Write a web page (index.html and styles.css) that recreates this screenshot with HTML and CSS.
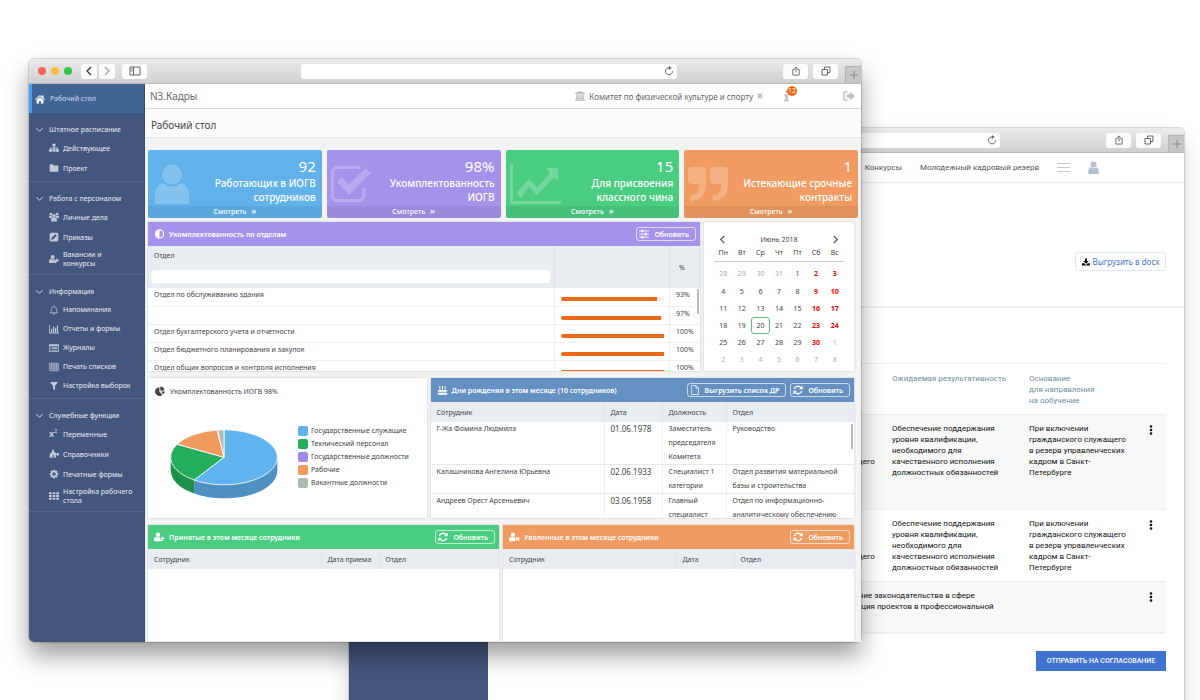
FILE: index.html
```html
<!DOCTYPE html>
<html lang="ru">
<head>
  <meta charset="UTF-8">
  <meta name="viewport" content="width=device-width, initial-scale=1.0">
  <title>N3.Кадры - Рабочий стол</title>
  <link rel="stylesheet" href="styles.css">
</head>
<body>
  <svg class="sprite" aria-hidden="true">
    <symbol id="i-left" viewBox="0 0 10 10"><path d="M7 1 3 5l4 4" fill="none" stroke="currentColor" stroke-width="1.2"/></symbol>
    <symbol id="i-right" viewBox="0 0 10 10"><path d="M3 1l4 4-4 4" fill="none" stroke="currentColor" stroke-width="1.2"/></symbol>
    <symbol id="i-down" viewBox="0 0 10 10"><path d="M1.5 3.500l3.500 3.500 3.500-3.500" fill="none" stroke="currentColor" stroke-width="1"/></symbol>
    <symbol id="i-panel" viewBox="0 0 12 10"><path d="M1 1h10v8H1zM4.500 1v8M2 3h1.500M2 5h1.500" fill="none" stroke="currentColor"/></symbol>
    <symbol id="i-reload" viewBox="0 0 10 10"><path d="M8.500 5.200A3.500 3.500 0 1 1 5.500 1.900" fill="none" stroke="currentColor"/><path d="M4.800 0l3 2-3 2z" fill="currentColor"/></symbol>
    <symbol id="i-share" viewBox="0 0 10 11"><path d="M3.500 4H1.500v6h7V4h-2M5 7V1M3 3l2-2 2 2" fill="none" stroke="currentColor"/></symbol>
    <symbol id="i-tabs" viewBox="0 0 10 10"><path d="M1 3.500h5.500V9H1zM3.500 3.500V1H9v5.500H6.500" fill="none" stroke="currentColor"/></symbol>
    <symbol id="i-plus" viewBox="0 0 10 10"><path d="M5 1v8M1 5h8" fill="none" stroke="currentColor"/></symbol>

    <symbol id="i-home" viewBox="0 0 16 16"><path d="M8 1.500 0 8.300l1 1.200 7-6 7 6 1-1.200-2.500-2.200V2h-2v2.400zM8 5 2.500 9.600V15h4v-4h3v4h4V9.600z"/></symbol>
    <symbol id="i-sitemap" viewBox="0 0 16 16"><path d="M5.500 1h5v4H8.700v2.200H14V10h2v4h-5v-4h1.600V8.600H8.700V10h1.700v4H5.600v-4h1.700V8.600H3.400V10H5v4H0v-4h2V7.200h5.300V5H5.500z"/></symbol>
    <symbol id="i-folder" viewBox="0 0 16 16"><path d="M1 3.500Q1 2 2.500 2h3Q7 2 7 4h6.500Q15 4 15 5.500v7q0 1.500-1.500 1.500h-11Q1 14 1 12.500z"/></symbol>
    <symbol id="i-users" viewBox="0 0 16 16"><circle cx="8" cy="6" r="2.900"/><circle cx="3" cy="3.500" r="2.200"/><circle cx="13" cy="3.500" r="2.200"/><path d="M3.500 15v-3q0-3.500 2.500-3.500 2 1.500 4 0 2.500 0 2.500 3.500v3zM0 9.500V8q0-2 1.500-2.200Q3 7 4.400 5.800q0 2 1 2.600-1.500.3-2 1.100zM16 9.500V8q0-2-1.500-2.200Q13 7 11.600 5.800q0 2-1 2.600 1.500.3 2 1.100z"/></symbol>
    <symbol id="i-edit" viewBox="0 0 16 16"><path fill-rule="evenodd" d="M4 1h8q3 0 3 3v8q0 3-3 3H4q-3 0-3-3V4q0-3 3-3zM3.500 12.500l3.300-.8 5.700-5.700-2.500-2.500-5.700 5.700z"/></symbol>
    <symbol id="i-useradd" viewBox="0 0 18 16"><circle cx="6.500" cy="4.500" r="3.700"/><path d="M0 15v-3q0-4 3.500-4 3 2 6 0 1.500 0 2.300 1H10v3h3v3zM13.200 7h1.800v2.500h2.500v1.900H15V14h-1.800v-2.600h-2.500V9.500h2.500z"/></symbol>
    <symbol id="i-userdel" viewBox="0 0 18 16"><circle cx="6.500" cy="4.500" r="3.700"/><path d="M0 15v-3q0-4 3.500-4 3 2 6 0l1.200.2L9.500 9.500 11.500 12 9 15z"/><path d="M11.500 8.500l5.500 5.500M17 8.500 11.500 14" stroke="currentColor" stroke-width="2"/></symbol>
    <symbol id="i-bell" viewBox="0 0 16 16"><path d="M8 1v1.500M2 12.500h12Q12 11 12 7q0-4.500-4-4.500T4 7q0 4-2 5.500zM6.500 13q0 1.800 1.500 1.800T9.500 13" fill="none" stroke="currentColor" stroke-width="1.200"/></symbol>
    <symbol id="i-chart" viewBox="0 0 16 16"><path d="M0 1h1.300v12.700H16V15H0zM3 8h2v5H3zM6.200 4h2v9h-2zM9.400 6h2v7h-2zM12.600 2.500h2V13h-2z"/></symbol>
    <symbol id="i-journal" viewBox="0 0 16 16"><path fill-rule="evenodd" d="M0 2h16v12H0zM1.200 5v7.800h13.600V5z"/><path d="M2.500 6.200h1.300v1.200H2.500zM5 6.200h8.500v1.200H5zM2.500 8.400h1.300v1.200H2.500zM5 8.400h8.500v1.200H5zM2.500 10.600h1.300v1.200H2.500zM5 10.600h8.500v1.200H5z"/></symbol>
    <symbol id="i-table" viewBox="0 0 16 16"><path d="M1 2h14v12H1zM1 5h14M1 8h14M1 11h14M4.500 2v12M8 2v12M11.500 2v12" fill="none" stroke="currentColor" stroke-width="1.100"/></symbol>
    <symbol id="i-filter" viewBox="0 0 16 16"><path d="M2 1.500h12v1L9.700 7.500V15L6.300 12V7.500L2 2.500z"/></symbol>
    <symbol id="i-tree" viewBox="0 0 16 16"><path d="M5 1h3v4h3v3h1V6.500h4v4h-4V9.500h-1V14H8v-4H6v4H1V8h1.500V5H5z"/></symbol>
    <symbol id="i-gear" viewBox="0 0 16 16"><circle cx="8" cy="8" r="4.200" fill="none" stroke="currentColor" stroke-width="3"/><path d="M8 1v2.500M8 12.500V15M1 8h2.500M12.500 8H15M3 3l1.800 1.800M11.200 11.200 13 13M13 3l-1.800 1.800M4.800 11.200 3 13" stroke="currentColor" stroke-width="2.600"/></symbol>
    <symbol id="i-grid" viewBox="0 0 16 16"><path d="M0 2h4.400v3.200H0zM5.800 2h4.400v3.200H5.800zM11.600 2H16v3.200h-4.400zM0 6.400h4.400v3.200H0zM5.800 6.400h4.400v3.200H5.800zM11.600 6.400H16v3.200h-4.400zM0 10.800h4.400V14H0zM5.800 10.800h4.400V14H5.800zM11.600 10.800H16V14h-4.400z"/></symbol>
    <symbol id="i-bank" viewBox="0 0 16 16"><path d="M8 0l8 3.200v1.300H0V3.200zM2 5.300h2v6.500h1.300V5.300h2v6.500h1.400V5.300h2v6.500H12V5.300h2v6.500h.8v1.400H1.200v-1.400H2zM0 13.900h16v1.600H0z"/></symbol>
    <symbol id="i-times" viewBox="0 0 10 10"><path d="M1.500 1.500l7 7M8.500 1.500l-7 7" stroke="currentColor" stroke-width="2.600"/></symbol>
    <symbol id="i-info" viewBox="0 0 8 16"><path d="M2.300 1h3.400v3H2.300zM1 5.500h5V13h1.200v2.200H.8V13h1.400V7.700H1z"/></symbol>
    <symbol id="i-exit" viewBox="0 0 16 16"><path d="M6 2.500H3Q1.200 2.500 1.200 4.300v7.400q0 1.800 1.800 1.800h3" fill="none" stroke="currentColor" stroke-width="1.800"/><path d="M5 6h4.500V2.500L15.800 8l-6.300 5.500V10H5z"/></symbol>
    <symbol id="i-user" viewBox="0 0 36 40"><circle cx="18" cy="10.500" r="10"/><path d="M1 40q-1-6 1-14 2-6 7-7 9 7 18 0 5 1 7 7 2 8 1 14-1 1-4 1H5q-3 0-4-1z"/></symbol>
    <symbol id="i-check" viewBox="0 0 42 38"><path d="M31 1.500H8Q1.500 1.500 1.500 8v22q0 6.500 6.500 6.500h20q6.500 0 6.500-6.500v-7" fill="none" stroke="currentColor" stroke-width="3.400"/><path d="M6 17l5-5 8 7.500L36 2.500l5.500 5L19 30.500z"/></symbol>
    <symbol id="i-trend" viewBox="0 0 52 40"><path d="M0 0h3v37h48v3H0z"/><path d="M6 29 19 15l8 8L40 9.500l-4-5.500h12v12.500l-4-3L27 31l-8-8-8.500 11z"/></symbol>
    <symbol id="i-quote" viewBox="0 0 42 36"><path d="M4 0h11q4 0 4 4v14q0 17-16 18V30q9-1 9-10v-2H4q-4 0-4-4V4q0-4 4-4zM27 0h11q4 0 4 4v14q0 17-16 18V30q9-1 9-10v-2h-8q-4 0-4-4V4q0-4 4-4z"/></symbol>
    <symbol id="i-adjust" viewBox="0 0 16 16"><circle cx="8" cy="8" r="6.500" fill="none" stroke="currentColor" stroke-width="2"/><path d="M8 2a6 6 0 0 0 0 12z"/></symbol>
    <symbol id="i-sliders" viewBox="0 0 16 16"><path d="M0 3h16M0 8h16M0 13h16" stroke="currentColor" stroke-width="1.400"/><path d="M4 1h3v4H4zM9.500 6h3v4h-3zM4 11h3v4H4z"/></symbol>
    <symbol id="i-pie" viewBox="0 0 16 16"><path d="M7 2v7l5 5A7 7 0 1 1 7 2z"/><path d="M8.500.8A6.800 6.800 0 0 1 15 7.200H8.500zM9.300 8.700H15.500Q15.300 11.500 13.500 13.200z"/></symbol>
    <symbol id="i-cake" viewBox="0 0 16 16"><path d="M3 1.500h1.500V7H3zM7.200 1.500h1.600V7H7.200zM11.500 1.500H13V7h-1.500zM1 8h14v2.500q-1.200 1.200-2.400 0-1.100 1.200-2.300 0-1.100 1.200-2.300 0-1.200 1.200-2.300 0-1.100 1.200-2.300 0-1.200 1.200-2.400 0zM1 12.300q1.200.6 2.400-.4 1.200 1 2.300 0 1.200 1 2.300 0 1.200 1 2.300 0 1.200 1 2.300 0 1.200 1 2.400.4L16 15.500H0z"/></symbol>
    <symbol id="i-file" viewBox="0 0 16 16"><path d="M2.500.8h7L13.500 5v10.200h-11zM9.500.8V5h4" fill="none" stroke="currentColor" stroke-width="1.200"/></symbol>
    <symbol id="i-sync" viewBox="0 0 16 16"><path d="M2 6.500A6.200 6.200 0 0 1 12.500 4M14 9.500A6.200 6.200 0 0 1 3.500 12" fill="none" stroke="currentColor" stroke-width="2.200"/><path d="M15.500.8v6H9.500zM.5 15.200v-6h6z"/></symbol>
    <symbol id="i-download" viewBox="0 0 16 16"><path d="M6 1h4v5h3.500L8 11.500 2.500 6H6zM0 10.500h4.500L8 13.800l3.500-3.300H16V15H0z"/></symbol>
    <symbol id="i-dots" viewBox="0 0 4 10"><circle cx="2" cy="1.500" r="1.300"/><circle cx="2" cy="5" r="1.300"/><circle cx="2" cy="8.500" r="1.300"/></symbol>
  </svg>

  <div class="desktop">
    <!-- back window -->
    <section class="window window-back">
      <div class="titlebar">
        <div class="lights"><i></i><i></i><i></i></div>
        <div class="address"><svg class="icon"><use href="#i-reload"/></svg></div>
        <div class="tools">
          <button class="chrome-btn" aria-label="Поделиться"><svg class="icon"><use href="#i-share"/></svg></button>
          <button class="chrome-btn" aria-label="Вкладки"><svg class="icon"><use href="#i-tabs"/></svg></button>
        </div>
        <button class="new-tab" aria-label="Новая вкладка"><svg class="icon"><use href="#i-plus"/></svg></button>
      </div>
      <div class="window-body">
        <aside class="back-sidebar"></aside>
        <main class="back-main">
          <nav class="back-nav">
            <a href="#">Конкурсы</a>
            <a href="#">Молодежный кадровый резерв</a>
            <button class="burger" aria-label="Меню"><i></i><i></i><i></i></button>
            <svg class="icon back-user"><use href="#i-user"/></svg>
          </nav>
          <div class="back-export">
            <button class="docx-btn"><svg class="icon"><use href="#i-download"/></svg>Выгрузить в docx</button>
          </div>
          <div class="back-content">
            <table class="plan">
              <colgroup><col class="c-goal"><col class="c-result"><col class="c-reason"><col class="c-menu"></colgroup>
              <thead>
                <tr><th></th><th>Ожидаемая результативность</th><th>Основание<br>для направления<br>на ообучение</th><th></th></tr>
              </thead>
              <tbody>
                <tr class="tall shaded">
                  <td class="goal">служащего</td>
                  <td>Обеспечение поддержания<br>уровня квалификации,<br>необходимого для<br>качественного исполнения<br>должностных обязанностей</td>
                  <td>При включении<br>гражданского служащего<br>в резерв управленческих<br>кадром в Санкт-<br>Петербурге</td>
                  <td class="more"><button class="dots" aria-label="Действия"><svg class="icon"><use href="#i-dots"/></svg></button></td>
                </tr>
                <tr>
                  <td class="goal">служащего</td>
                  <td>Обеспечение поддержания<br>уровня квалификации,<br>необходимого для<br>качественного исполнения<br>должностных обязанностей</td>
                  <td>При включении<br>гражданского служащего<br>в резерв управленческих<br>кадром в Санкт-<br>Петербурге</td>
                  <td class="more"><button class="dots" aria-label="Действия"><svg class="icon"><use href="#i-dots"/></svg></button></td>
                </tr>
                <tr class="short shaded">
                  <td class="law" colspan="3">Изменение законодательства в сфере<br>Реализация проектов в профессиональной</td>
                  <td class="more"><button class="dots" aria-label="Действия"><svg class="icon"><use href="#i-dots"/></svg></button></td>
                </tr>
              </tbody>
            </table>
            <button class="submit-btn">ОТПРАВИТЬ НА СОГЛАСОВАНИЕ</button>
          </div>
        </main>
      </div>
    </section>

    <!-- front window -->
    <section class="window window-front">
      <div class="titlebar">
        <div class="lights"><i></i><i></i><i></i></div>
        <div class="nav-btns">
          <button class="chrome-btn small" aria-label="Назад"><svg class="icon"><use href="#i-left"/></svg></button>
          <button class="chrome-btn small dim" aria-label="Вперед"><svg class="icon"><use href="#i-right"/></svg></button>
        </div>
        <button class="chrome-btn" aria-label="Боковая панель"><svg class="icon wide"><use href="#i-panel"/></svg></button>
        <div class="address"><svg class="icon"><use href="#i-reload"/></svg></div>
        <div class="tools">
          <button class="chrome-btn" aria-label="Поделиться"><svg class="icon"><use href="#i-share"/></svg></button>
          <button class="chrome-btn" aria-label="Вкладки"><svg class="icon"><use href="#i-tabs"/></svg></button>
        </div>
        <button class="new-tab" aria-label="Новая вкладка"><svg class="icon"><use href="#i-plus"/></svg></button>
      </div>

      <div class="window-body">
        <aside class="sidebar">
          <a class="home" href="#"><svg class="icon"><use href="#i-home"/></svg>Рабочий стол</a>
          <div class="menu-group">
            <h2><svg class="icon"><use href="#i-down"/></svg>Штатное расписание</h2>
            <a href="#"><svg class="icon"><use href="#i-sitemap"/></svg>Действующее</a>
            <a href="#"><svg class="icon"><use href="#i-folder"/></svg>Проект</a>
          </div>
          <div class="menu-group">
            <h2><svg class="icon"><use href="#i-down"/></svg>Работа с персоналом</h2>
            <a href="#"><svg class="icon"><use href="#i-users"/></svg>Личные дела</a>
            <a href="#"><svg class="icon"><use href="#i-edit"/></svg>Приказы</a>
            <a class="two-line" href="#"><svg class="icon"><use href="#i-useradd"/></svg>Вакансии и<br>конкурсы</a>
          </div>
          <div class="menu-group dense">
            <h2><svg class="icon"><use href="#i-down"/></svg>Информация</h2>
            <a href="#"><svg class="icon"><use href="#i-bell"/></svg>Напоминания</a>
            <a href="#"><svg class="icon"><use href="#i-chart"/></svg>Отчеты и формы</a>
            <a href="#"><svg class="icon"><use href="#i-journal"/></svg>Журналы</a>
            <a href="#"><svg class="icon"><use href="#i-table"/></svg>Печать списков</a>
            <a href="#"><svg class="icon"><use href="#i-filter"/></svg>Настройка выборок</a>
          </div>
          <div class="menu-group">
            <h2><svg class="icon"><use href="#i-down"/></svg>Служебные функции</h2>
            <a href="#"><span class="sup-icon">x<sup>2</sup></span>Переменные</a>
            <a href="#"><svg class="icon"><use href="#i-tree"/></svg>Справочники</a>
            <a href="#"><svg class="icon"><use href="#i-gear"/></svg>Печатные формы</a>
            <a class="two-line" href="#"><svg class="icon"><use href="#i-grid"/></svg>Настройка рабочего<br>стола</a>
          </div>
        </aside>

        <main class="main">
          <header class="topbar">
            <span class="brand">N3.Кадры</span>
            <span class="org"><svg class="icon"><use href="#i-bank"/></svg>Комитет по физической культуре и спорту<button class="clear" aria-label="Сбросить"><svg class="icon"><use href="#i-times"/></svg></button></span>
            <span class="notice"><svg class="icon"><use href="#i-info"/></svg><b>12</b></span>
            <a class="exit" href="#" aria-label="Выход"><svg class="icon"><use href="#i-exit"/></svg></a>
          </header>
          <h1 class="page-title">Рабочий стол</h1>

          <div class="content">
            <div class="cards">
              <div class="card blue">
                <div class="card-body"><svg class="icon"><use href="#i-user"/></svg><div class="card-text"><strong>92</strong>Работающих в ИОГВ<br>сотрудников</div></div>
                <a href="#">Смотреть <span>»</span></a>
              </div>
              <div class="card purple">
                <div class="card-body"><svg class="icon"><use href="#i-check"/></svg><div class="card-text"><strong>98%</strong>Укомплектованность<br>ИОГВ</div></div>
                <a href="#">Смотреть <span>»</span></a>
              </div>
              <div class="card green">
                <div class="card-body"><svg class="icon trend"><use href="#i-trend"/></svg><div class="card-text"><strong>15</strong>Для присвоения<br>классного чина</div></div>
                <a href="#">Смотреть <span>»</span></a>
              </div>
              <div class="card orange">
                <div class="card-body"><svg class="icon"><use href="#i-quote"/></svg><div class="card-text"><strong>1</strong>Истекающие срочные<br>контракты</div></div>
                <a href="#">Смотреть <span>»</span></a>
              </div>
            </div>

            <div class="row row-staff">
              <section class="panel">
                <div class="panel-head purple">
                  <svg class="icon"><use href="#i-adjust"/></svg><h3>Укомплектованность по отделам</h3>
                  <button class="outline-btn"><svg class="icon"><use href="#i-sliders"/></svg>Обновить</button>
                </div>
                <table class="staff">
                  <colgroup><col><col class="c-bar"><col class="c-pct"></colgroup>
                  <thead>
                    <tr><th><label for="dept">Отдел</label><input type="text" id="dept"></th><th></th><th>%</th></tr>
                  </thead>
                  <tbody>
                    <tr><td>Отдел по обслуживанию здания</td><td><div class="bar"><i style="width: 93%"></i></div></td><td>93%</td></tr>
                    <tr><td></td><td><div class="bar"><i style="width: 97%"></i></div></td><td>97%</td></tr>
                    <tr><td>Отдел бухгалтерского учета и отчетности</td><td><div class="bar"><i style="width: 100%"></i></div></td><td>100%</td></tr>
                    <tr><td>Отдел бюджетного планирования и закупок</td><td><div class="bar"><i style="width: 100%"></i></div></td><td>100%</td></tr>
                    <tr><td>Отдел общих вопросов и контроля исполнения</td><td><div class="bar"><i style="width: 100%"></i></div></td><td>100%</td></tr>
                  </tbody>
                </table>
                <div class="scroll-thumb in-staff"></div>
              </section>

              <section class="panel calendar">
                <div class="cal-head">
                  <button aria-label="Предыдущий месяц"><svg class="icon"><use href="#i-left"/></svg></button>
                  <span>Июнь 2018</span>
                  <button aria-label="Следующий месяц"><svg class="icon"><use href="#i-right"/></svg></button>
                </div>
                <table>
                  <thead><tr><th>Пн</th><th>Вт</th><th>Ср</th><th>Чт</th><th>Пт</th><th>Сб</th><th>Вс</th></tr></thead>
                  <tbody>
                    <tr><td class="out">28</td><td class="out">29</td><td class="out">30</td><td class="out">31</td><td>1</td><td class="off">2</td><td class="off">3</td></tr>
                    <tr><td>4</td><td>5</td><td>6</td><td>7</td><td>8</td><td class="off">9</td><td class="off">10</td></tr>
                    <tr><td>11</td><td>12</td><td>13</td><td>14</td><td>15</td><td class="off">16</td><td class="off">17</td></tr>
                    <tr><td>18</td><td>19</td><td><span class="today">20</span></td><td>21</td><td>22</td><td class="off">23</td><td class="off">24</td></tr>
                    <tr><td>25</td><td>26</td><td>27</td><td>28</td><td>29</td><td class="off">30</td><td class="out">1</td></tr>
                    <tr><td class="out">2</td><td class="out">3</td><td class="out">4</td><td class="out">5</td><td class="out">6</td><td class="out">7</td><td class="out">8</td></tr>
                  </tbody>
                </table>
              </section>
            </div>

            <div class="row row-birthdays">
              <section class="panel">
                <div class="chart-head"><svg class="icon"><use href="#i-pie"/></svg><h3>Укомплектованность ИОГВ 98%</h3></div>
                <div class="chart">
                  <svg class="pie-chart" viewBox="-2 -2 322 208">
                    <path fill="#1f914d" d="M0 82v40q4 44 70 68v-40z"/>
                    <path fill="#4d90c1" d="M70 150v40c30 11 58 14 89 14 90 0 159-36 159-82V82z"/>
                    <g stroke="#fff" stroke-width="2.500" stroke-linejoin="round">
                      <path fill="#5fb3ef" d="M159 82V0A159 82 0 1 1 70 150z"/>
                      <path fill="#25ad5e" d="M159 82 70 150A159 82 0 0 1 19 43z"/>
                      <path fill="#f09a60" d="M159 82 19 43A159 82 0 0 1 138 1z"/>
                      <path fill="#aebdb3" d="M159 82 140 1A159 82 0 0 1 159 0z"/>
                    </g>
                  </svg>
                  <ul class="legend">
                    <li><i class="l-blue"></i>Государственные служащие</li>
                    <li><i class="l-green"></i>Технический персонал</li>
                    <li><i class="l-purple"></i>Государственные должности</li>
                    <li><i class="l-orange"></i>Рабочие</li>
                    <li><i class="l-gray"></i>Вакантные должности</li>
                  </ul>
                </div>
              </section>

              <section class="panel">
                <div class="panel-head steel">
                  <svg class="icon"><use href="#i-cake"/></svg><h3>Дни рождения в этом месяце (10 сотрудников)</h3>
                  <button class="outline-btn"><svg class="icon"><use href="#i-file"/></svg>Выгрузить список ДР</button>
                  <button class="outline-btn"><svg class="icon"><use href="#i-sync"/></svg>Обновить</button>
                </div>
                <table class="people">
                  <colgroup><col><col class="c-date"><col class="c-post"><col class="c-dept"></colgroup>
                  <thead><tr><th>Сотрудник</th><th>Дата</th><th>Должность</th><th>Отдел</th></tr></thead>
                  <tbody>
                    <tr><td>Г-Жа Фомина Людмила</td><td class="date">01.06.1978</td><td>Заместитель<br>председателя<br>Комитета</td><td>Руководство</td></tr>
                    <tr><td>Калашникова Ангелина Юрьевна</td><td class="date">02.06.1933</td><td>Специалист 1<br>категории</td><td>Отдел развития материальной<br>базы и строительства</td></tr>
                    <tr><td>Андреев Орест Арсеньевич</td><td class="date">03.06.1958</td><td>Главный<br>специалист</td><td>Отдел по информационно-<br>аналитическому обеспечению</td></tr>
                  </tbody>
                </table>
                <div class="scroll-thumb in-people"></div>
              </section>
            </div>

            <div class="row row-moves">
              <section class="panel">
                <div class="panel-head green">
                  <svg class="icon"><use href="#i-useradd"/></svg><h3>Принятые в этом месяце сотрудники</h3>
                  <button class="outline-btn"><svg class="icon"><use href="#i-sync"/></svg>Обновить</button>
                </div>
                <table class="people moves">
                  <colgroup><col><col class="c-date"><col class="c-last"></colgroup>
                  <thead><tr><th>Сотрудник</th><th>Дата приема</th><th>Отдел</th></tr></thead>
                </table>
              </section>
              <section class="panel">
                <div class="panel-head orange">
                  <svg class="icon"><use href="#i-userdel"/></svg><h3>Уволенные в этом месяце сотрудники</h3>
                  <button class="outline-btn"><svg class="icon"><use href="#i-sync"/></svg>Обновить</button>
                </div>
                <table class="people moves">
                  <colgroup><col><col class="c-date"><col class="c-last"></colgroup>
                  <thead><tr><th>Сотрудник</th><th>Дата</th><th>Отдел</th></tr></thead>
                </table>
              </section>
            </div>
          </div>
        </main>
      </div>
    </section>
  </div>
</body>
</html>
```
FILE: styles.css
```css
* {
  box-sizing: border-box;
}

body {
  margin: 0;
  background: #fff;
  color: #444;
  font-family: "Noto Sans", sans-serif;
  font-size: 7px;
}

h1, h2, h3, ul {
  margin: 0;
  padding: 0;
  font-weight: normal;
  list-style: none;
}

a {
  color: inherit;
  text-decoration: none;
}

button {
  padding: 0;
  border: none;
  background: none;
  color: inherit;
  font: inherit;
  cursor: pointer;
}

table {
  width: 100%;
  border-collapse: collapse;
  table-layout: fixed;
}

th, td {
  padding: 0;
  text-align: left;
  font-weight: normal;
}

.sprite {
  position: absolute;
  width: 0;
  height: 0;
}

.icon {
  display: block;
  flex: none;
  width: 10px;
  height: 10px;
  fill: currentColor;
}

.desktop {
  position: relative;
  min-height: 100vh;
  overflow: hidden;
}

/* Browser windows */
.window {
  position: absolute;
  display: flex;
  flex-direction: column;
  border-radius: 5px;
  background: #fff;
}

.window-front {
  top: 59px;
  left: 29px;
  right: 339px;
  box-shadow: 0 0 1px 1px rgba(0, 0, 0, 0.16), 0 14px 24px rgba(0, 0, 0, 0.38);
}

.window-back {
  top: 128px;
  left: 349px;
  right: 16px;
  min-height: 100vh;
  box-shadow: 0 0 1px 1px rgba(0, 0, 0, 0.16), 0 12px 22px rgba(0, 0, 0, 0.16);
}

.titlebar {
  display: flex;
  align-items: center;
  height: 25px;
  padding-left: 9px;
  border-bottom: 1px solid #bdbdbd;
  border-radius: 5px 5px 0 0;
  background: linear-gradient(#ebebeb, #d0d0d0);
  color: #666;
}

.lights {
  display: flex;
  gap: 5px;
  width: 43px;
}

.lights i {
  width: 8px;
  height: 8px;
  border-radius: 50%;
  background: #fc605b;
}

.lights i:nth-child(2) {
  background: #fdbc40;
}

.lights i:nth-child(3) {
  background: #33c748;
}

.nav-btns {
  display: flex;
  gap: 2px;
  margin-right: 7px;
}

.chrome-btn {
  display: flex;
  align-items: center;
  justify-content: center;
  width: 25px;
  height: 15px;
  border-radius: 3px;
  background: #fcfcfc;
}

.chrome-btn.small {
  width: 16px;
  color: #333;
}

.chrome-btn.small.dim {
  color: #999;
}

.icon.wide {
  width: 12px;
}

.address {
  display: flex;
  align-items: center;
  justify-content: flex-end;
  flex: none;
  width: 376px;
  height: 15px;
  margin-left: auto;
  padding-right: 3px;
  border-radius: 3px;
  background: #fff;
}

.tools {
  display: flex;
  gap: 5px;
  margin-left: 106px;
}

.new-tab {
  display: flex;
  align-items: center;
  justify-content: center;
  align-self: flex-end;
  width: 16px;
  height: 17px;
  margin-left: 7px;
  border: 1px solid #b5b5b5;
  border-width: 1px 0 0 1px;
  background: #c6c6c6;
  color: #8a8a8a;
}

.window-body {
  display: flex;
  flex: 1;
}

/* Sidebar */
.sidebar {
  flex: none;
  width: 116px;
  border-right: 1px solid #3a4b70;
  border-radius: 0 0 0 5px;
  background: #43567d;
  color: #e8ecf3;
}

.sidebar a,
.sidebar h2 {
  display: flex;
  align-items: center;
  font-size: 7px;
}

.sidebar .home {
  gap: 5px;
  height: 29px;
  padding-left: 3px;
  border-left: 3px solid #41a2f5;
  background: #426598;
  color: #c9d6e8;
}

.home .icon {
  color: #fff;
}

.menu-group {
  padding: 7px 0 3px;
  border-bottom: 1px solid #53658a;
}

.menu-group h2 {
  gap: 5px;
  height: 18px;
  padding-left: 6px;
}

.menu-group h2 .icon {
  width: 9px;
  height: 9px;
}

.menu-group a {
  gap: 4px;
  height: 20px;
  padding-left: 20px;
}

.menu-group a .icon {
  color: #c0c8d8;
}

.menu-group.dense a {
  height: 19px;
}

.menu-group a.two-line {
  height: 24px;
  line-height: 9px;
}

.sup-icon {
  width: 10px;
  font-size: 9px;
  font-weight: bold;
  line-height: 10px;
  color: #c0c8d8;
}

.sup-icon sup {
  font-size: 5px;
  line-height: 0;
}

/* Main area */
.main {
  display: flex;
  flex-direction: column;
  flex: 1;
  min-width: 0;
  background: #f3f3f3;
}

.topbar {
  display: flex;
  align-items: center;
  height: 25px;
  padding: 0 6px 0 5px;
  border-bottom: 1px solid #d9d9d9;
  background: #fff;
  color: #666;
}

.brand {
  margin-right: auto;
  font-size: 10px;
}

.org {
  display: flex;
  align-items: center;
  gap: 4px;
  font-size: 8px;
}

.org .icon {
  color: #b5b5b5;
}

.clear .icon {
  width: 6px;
  height: 6px;
}

.notice {
  position: relative;
  width: 12px;
  margin: 0 48px 0 20px;
}

.notice .icon {
  width: 7px;
  height: 12px;
  color: #c4c4c4;
}

.notice b {
  position: absolute;
  top: -4px;
  left: 4px;
  width: 10px;
  height: 10px;
  border-radius: 50%;
  background: #ee6511;
  color: #fff;
  font-size: 7px;
  font-weight: normal;
  line-height: 10px;
  text-align: center;
}

.exit .icon {
  width: 12px;
  height: 12px;
  color: #bbb;
}

.page-title {
  height: 29px;
  padding-left: 6px;
  border-bottom: 1px solid #e6e6e6;
  background: #fbfbfb;
  color: #444;
  font-size: 10px;
  line-height: 33px;
}

.content {
  display: flex;
  flex-direction: column;
  padding: 12px 3px 1px;
}

.cards {
  display: grid;
  grid-template-columns: repeat(4, 1fr);
  gap: 5px;
}

.card {
  overflow: hidden;
  border-radius: 2px;
  color: #fff;
}

.blue { background: #61b2ea; }
.purple { background: #a592ea; }
.green { background: #4acd81; }
.orange { background: #f09b62; }
.steel { background: #6491c1; }

.card-body {
  display: flex;
  align-items: center;
  justify-content: space-between;
  height: 56px;
  padding: 3px 6px 0;
}

.card-body .icon {
  width: 40px;
  height: 40px;
  margin-top: 8px;
  margin-left: -2px;
  opacity: 0.22;
}

.card-body .icon.trend {
  width: 52px;
}

.card-text {
  font-size: 10px;
  font-weight: 500;
  line-height: 14px;
  text-align: right;
  white-space: nowrap;
}

.card-text strong {
  display: block;
  font-size: 15px;
  font-weight: normal;
  line-height: 20px;
}

.card > a {
  display: block;
  height: 12px;
  background: rgba(0, 0, 0, 0.06);
  font-weight: 500;
  line-height: 9px;
  text-align: center;
}

.card > a span {
  margin-left: 3px;
  font-size: 9px;
}

/* Panels */
.row {
  display: grid;
  gap: 4px;
  padding-right: 4px;
}

.row-staff {
  grid-template-columns: 552fr 150fr;
  margin-top: 4px;
}

.row-birthdays {
  grid-template-columns: 279fr 424fr;
  margin-top: 7px;
}

.row-moves {
  grid-template-columns: 1fr 1fr;
  margin-top: 7px;
}

.panel {
  position: relative;
  overflow: hidden;
  min-width: 0;
  background: #fff;
  box-shadow: 0 0 2px rgba(0, 0, 0, 0.18);
}

.row-staff .panel {
  height: 149px;
}

.row-birthdays .panel {
  height: 140px;
}

.row-moves .panel {
  height: 116px;
}

.panel-head {
  display: flex;
  align-items: center;
  gap: 4px;
  height: 24px;
  padding: 0 4px 0 6px;
  color: #fff;
}

.panel-head h3 {
  margin-right: auto;
  font-size: 7px;
  font-weight: 600;
}

.panel-head > .icon {
  width: 11px;
}

.outline-btn {
  display: flex;
  align-items: center;
  gap: 5px;
  height: 14px;
  padding: 0 6px 0 2px;
  border: 1px solid rgba(255, 255, 255, 0.65);
  border-radius: 3px;
  font-weight: 600;
}

.staff th {
  height: 42px;
  padding-left: 9px;
  border-right: 1px solid #dfe5ea;
  background: #e8edf1;
}

.staff th:first-child {
  padding: 5px 4px 4px 3px;
  vertical-align: top;
}

.staff label {
  display: block;
  padding-left: 3px;
  line-height: 10px;
}

.staff input {
  display: block;
  width: 100%;
  height: 13px;
  margin-top: 9px;
  border: none;
  border-radius: 3px;
  background: #fff;
}

.staff td {
  height: 18px;
  padding-left: 6px;
  border-right: 1px solid #efefef;
  border-bottom: 1px solid #efefef;
  line-height: 13px;
  vertical-align: top;
}

.c-bar {
  width: 115px;
}

.c-pct {
  width: 30px;
}

.staff td:last-child {
  border-right: none;
}

.bar {
  width: 103px;
  height: 4px;
  margin-top: 9px;
  border-radius: 2px;
  background: #eee;
}

.bar i {
  display: block;
  height: 4px;
  border-radius: 2px 0 0 2px;
  background: #ec6a17;
}

.scroll-thumb {
  position: absolute;
  right: 1px;
  width: 2px;
  height: 25px;
  background: #bbb;
}

.in-staff {
  top: 67px;
}

.in-people {
  top: 46px;
}

/* Calendar */
.calendar {
  padding: 11px 10px 0;
}

.cal-head {
  display: flex;
  align-items: center;
  justify-content: space-between;
  height: 12px;
  padding: 0 4px;
}

.cal-head .icon {
  width: 9px;
  height: 9px;
}

.calendar th {
  height: 16px;
  border-bottom: 1px solid #ccc;
  text-align: center;
}

.calendar td {
  height: 17px;
  text-align: center;
}

.calendar tbody tr:first-child td {
  height: 22px;
  padding-top: 3px;
}

.calendar .out {
  color: #aaa;
}

.calendar .off {
  color: #f00;
  font-weight: bold;
}

.today {
  display: block;
  border: 1px solid #5cc086;
  border-radius: 3px;
  line-height: 15px;
}

/* Pie chart */
.chart-head {
  display: flex;
  align-items: center;
  gap: 5px;
  height: 26px;
  padding-left: 7px;
}

.chart-head h3 {
  font-size: 7px;
}

.chart {
  display: flex;
  align-items: flex-start;
  padding: 20px 0 0 22px;
}

.pie-chart {
  flex: none;
  width: 108px;
  height: 72px;
  margin: 4px 20px 0 0;
}

.legend li {
  display: flex;
  align-items: center;
  gap: 3px;
  height: 13px;
}

.legend i {
  width: 10px;
  height: 10px;
  border-radius: 2px;
}

.l-blue { background: #5fb3ef; }
.l-green { background: #25ad5e; }
.l-purple { background: #a08be8; }
.l-orange { background: #f09a60; }
.l-gray { background: #aebdb3; }

/* People tables */
.people th {
  height: 20px;
  padding-left: 6px;
  border-right: 1px solid #dfe5ea;
  background: #e8edf1;
}

.people td {
  padding-left: 6px;
  border-right: 1px solid #efefef;
  border-bottom: 1px solid #e8e8e8;
  line-height: 14px;
  vertical-align: top;
  white-space: nowrap;
}

.people .date {
  font-size: 8px;
}

.people th:last-child,
.people td:last-child {
  border-right: none;
}

.c-date {
  width: 58px;
}

.c-post {
  width: 64px;
}

.c-dept {
  width: 128px;
}

.c-last {
  width: 120px;
}

/* Back window */
.back-sidebar {
  flex: none;
  width: 139px;
  background: #43567d;
}

.back-main {
  flex: 1;
  min-width: 0;
  font-family: Roboto, sans-serif;
  font-size: 8px;
}

.back-nav {
  display: flex;
  align-items: center;
  justify-content: flex-end;
  gap: 18px;
  height: 30px;
  padding-right: 85px;
  border-bottom: 1px solid #dfebee;
  color: #555;
}

.burger {
  display: flex;
  flex-direction: column;
  gap: 3px;
  width: 13px;
}

.burger i {
  height: 1px;
  background: #ccc;
}

.back-user {
  width: 11px;
  height: 13px;
  color: #b4bfcf;
}

.back-export {
  display: flex;
  justify-content: flex-end;
  height: 125px;
  padding: 69px 18px 0 0;
  border-bottom: 2px solid #edf2f5;
}

.docx-btn {
  display: flex;
  align-items: center;
  justify-content: center;
  gap: 3px;
  width: 91px;
  height: 19px;
  border: 1px solid #dde9f1;
  border-radius: 3px;
  color: #4277d3;
  font-family: "Noto Sans", sans-serif;
}

.docx-btn .icon {
  width: 8px;
  height: 8px;
  color: #111;
}

.back-content {
  display: flex;
  flex-direction: column;
  align-items: flex-end;
  padding: 55px 18px 0 12px;
}

.plan {
  border-top: 1px solid #eee;
  border-bottom: 2px solid #edf2f5;
  color: #111;
  line-height: 11px;
}

.c-result {
  width: 137px;
}

.c-reason {
  width: 114px;
}

.c-menu {
  width: 23px;
}

.plan th {
  height: 51px;
  padding-top: 9px;
  color: #6f8d9c;
  vertical-align: top;
  white-space: nowrap;
}

.plan td {
  height: 72px;
  padding-top: 8px;
  border-top: 1px solid #ebeff1;
  vertical-align: top;
  white-space: nowrap;
}

.plan .tall td {
  height: 95px;
}

.plan .short td {
  height: 51px;
}

.plan .shaded td {
  background: #f8f8f8;
}

.plan .goal {
  padding-top: 41px;
  padding-left: 333px;
}

.plan .law {
  padding-left: 330px;
}

.plan .more {
  padding-top: 10px;
  padding-left: 6px;
}

.dots .icon {
  width: 4px;
  height: 10px;
}

.submit-btn {
  width: 130px;
  height: 20px;
  margin-top: 17px;
  background: #4072cf;
  color: #fff;
  font-size: 7px;
  font-weight: 500;
}
```
